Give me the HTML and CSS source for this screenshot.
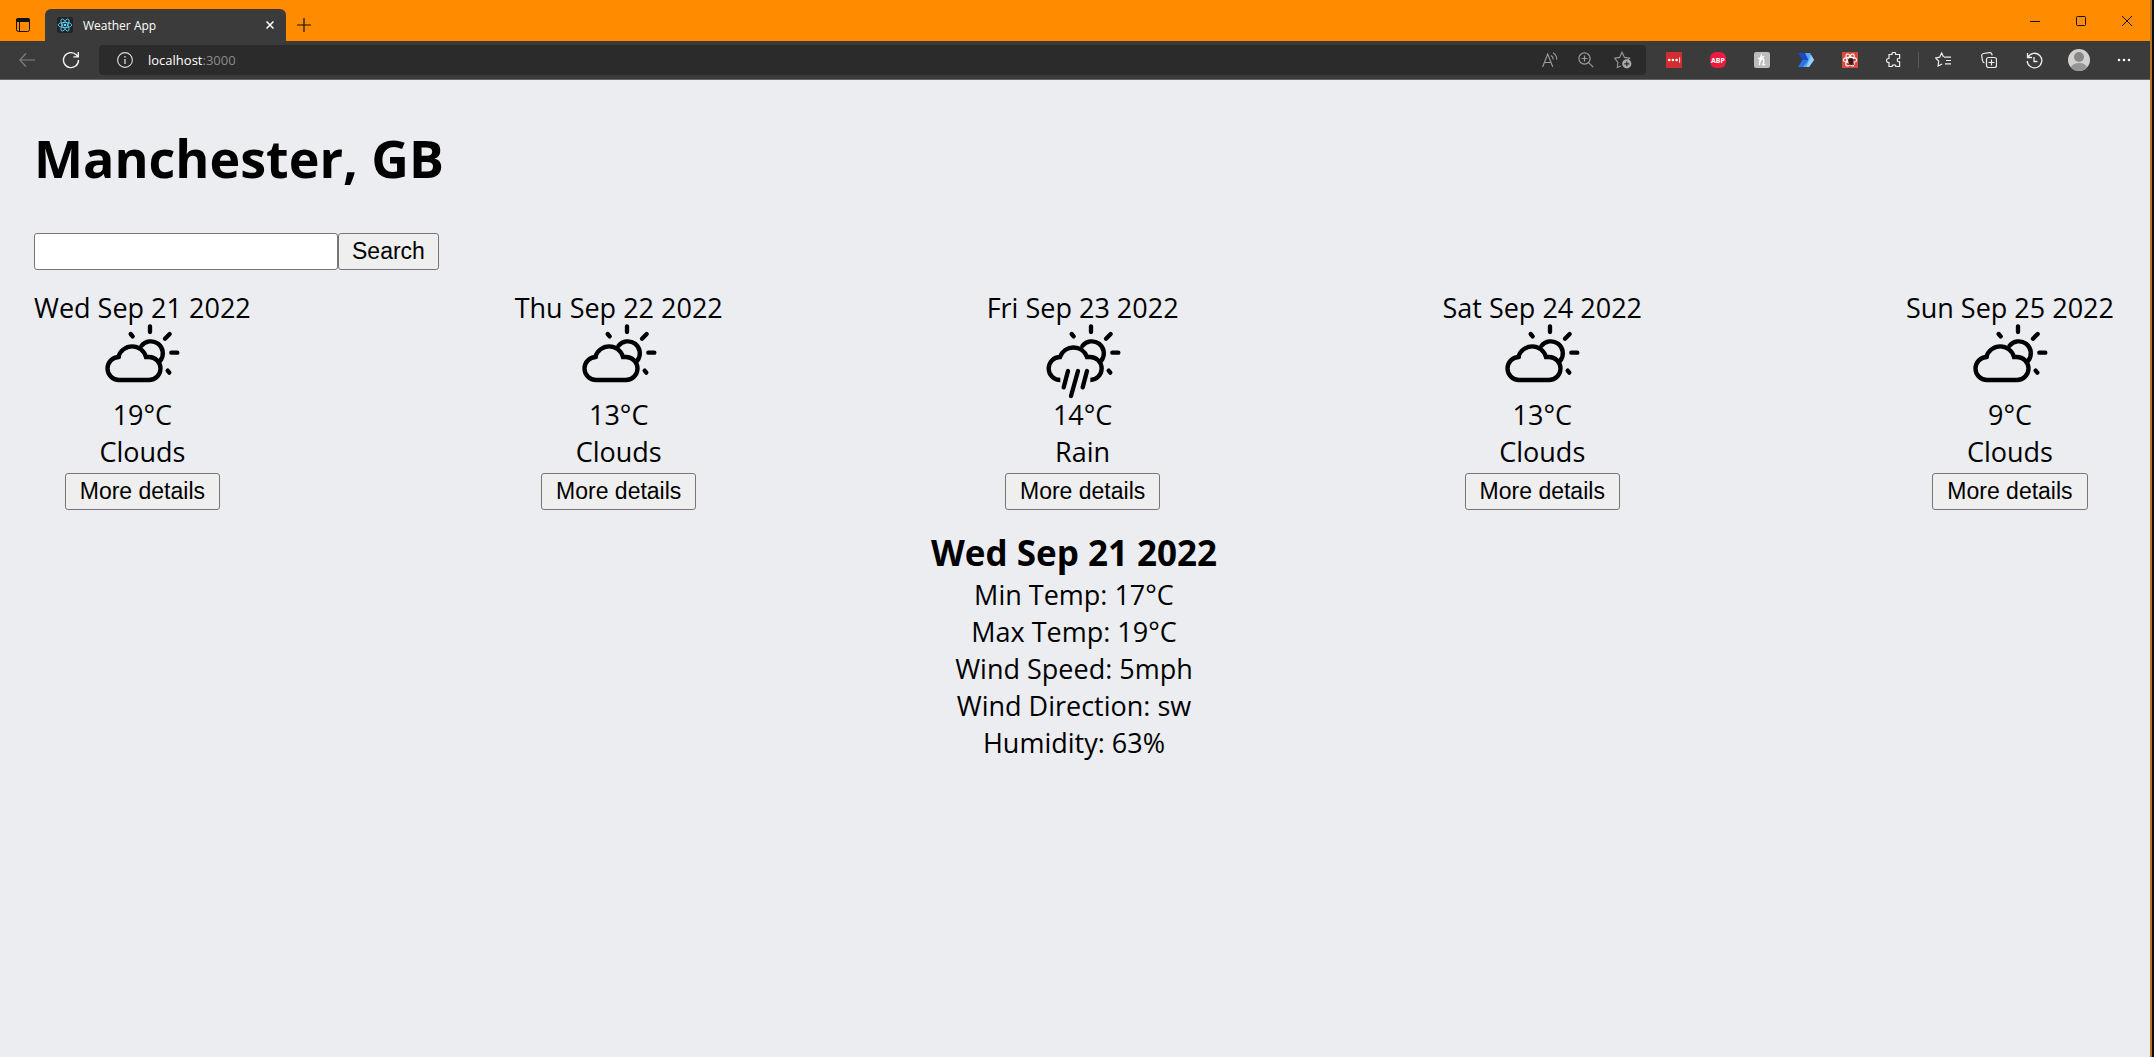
FILE: index.html
```html
<!DOCTYPE html>
<html lang="en">
<head>
<meta charset="utf-8">
<title>Weather App</title>
<link rel="stylesheet" href="styles.css">
</head>
<body>
<svg class="defs" aria-hidden="true">
  <defs>
    <g id="sun">
      <path d="M424 197A35 35 0 1 1 481 241"/>
      <path d="M450 138v17M509 161l-14 14M514 217h18M392 161l6 7M503 271l5 6"/>
    </g>
    <g id="clouds">
      <use href="#sun"/>
      <path d="M357 230A34 34 0 0 0 357 299H447A34 34 0 0 0 447 230H438A43 43 0 0 0 355 230"/>
    </g>
    <g id="rain">
      <use href="#sun"/>
      <path stroke-linecap="butt" d="M358 299A34 34 0 0 1 357 230A43 43 0 0 1 438 230H447A34 34 0 0 1 448 299"/>
      <path d="M381 272l-13 49M411 272l-21 75M438 272l-13 49"/>
    </g>
  </defs>
</svg>
<div class="window">
  <header class="titlebar">
    <button class="tab-actions" aria-label="Tab actions">
      <svg width="14" height="14" viewBox="0 0 14 14"><rect x=".5" y=".5" width="13" height="13" rx="2" fill="none" stroke="#111"/><path d="M0 4V2a2 2 0 0 1 2-2h10a2 2 0 0 1 2 2v2z" fill="#111"/><path d="M3.500 4v9" stroke="#111"/></svg>
    </button>
    <div class="tab">
      <svg width="16" height="16" viewBox="0 0 16 16"><rect width="16" height="16" rx="2" fill="#20232a"/><g fill="none" stroke="#61dafb" stroke-width=".8"><ellipse cx="8" cy="8" rx="6.800" ry="2.600"/><ellipse cx="8" cy="8" rx="6.800" ry="2.600" transform="rotate(60 8 8)"/><ellipse cx="8" cy="8" rx="6.800" ry="2.600" transform="rotate(120 8 8)"/></g><circle cx="8" cy="8" r="1.300" fill="#61dafb"/></svg>
      <span class="tab-title">Weather App</span>
      <button aria-label="Close tab"><svg width="8" height="8" viewBox="0 0 8 8"><path d="M.5.5l7 7M7.500.5l-7 7" stroke="#fff" stroke-width="1.500"/></svg></button>
    </div>
    <button class="new-tab" aria-label="New tab"><svg width="14" height="14" viewBox="0 0 14 14"><path d="M7 0v14M0 7h14" stroke="#111" stroke-width="1.200"/></svg></button>
    <div class="window-controls">
      <button aria-label="Minimize"><svg width="10" height="10" viewBox="0 0 10 10"><path d="M0 5.500h10" stroke="#111"/></svg></button>
      <button aria-label="Maximize"><svg width="10" height="10" viewBox="0 0 10 10"><rect x=".5" y=".5" width="9" height="9" rx="1" fill="none" stroke="#111"/></svg></button>
      <button aria-label="Close"><svg width="10" height="10" viewBox="0 0 10 10"><path d="M0 0l10 10M10 0L0 10" stroke="#111"/></svg></button>
    </div>
  </header>
  <nav class="toolbar">
    <button class="back" aria-label="Back"><svg width="16" height="14" viewBox="0 0 16 14"><path d="M7 .5L.8 7 7 13.500M.8 7H16" fill="none" stroke="#818181" stroke-width="1.100"/></svg></button>
    <button class="reload" aria-label="Refresh"><svg width="18" height="18" viewBox="0 0 18 18"><path d="M16.500 9A7.500 7.500 0 1 1 14.500 4L16 5.600M16.300 1v4.900h-4.900" fill="none" stroke="#f2f2f2" stroke-width="1.400"/></svg></button>
    <div class="address">
      <svg width="16" height="16" viewBox="0 0 16 16"><circle cx="8" cy="8" r="7.400" fill="none" stroke="#ddd" stroke-width="1.100"/><path d="M8 7v5M8 4v1.500" stroke="#ddd" stroke-width="1.300"/></svg>
      <span class="url"><b>localhost</b>:3000</span>
      <button aria-label="Read aloud"><svg width="16" height="16" viewBox="0 0 16 16" fill="none" stroke="#9b9b9b" stroke-width="1.100"><path d="M.6 15L5.700 2l5.100 13M2.400 10.500H9M9 3.500q2.300 1.300 2.200 4M11 .8q4 2.500 3.800 7"/></svg></button>
      <button aria-label="Zoom"><svg width="16" height="16" viewBox="0 0 16 16" fill="none" stroke="#9b9b9b" stroke-width="1.200"><circle cx="6.500" cy="6.500" r="5.600"/><path d="M3.500 6.500h6M6.500 3.500v6M10.600 10.600l4.600 4.600"/></svg></button>
      <button aria-label="Add to favorites"><svg width="18" height="18" viewBox="0 0 18 18"><path d="M7 15l-3.700 1.500.6-5L.6 7.200l5-.8L8 1.200l2.500 5.200 5 .8-1.600 1.700" fill="none" stroke="#9b9b9b" stroke-width="1.100"/><circle cx="12.800" cy="12.800" r="4.600" fill="#aaa"/><path d="M12.800 10.300v5M10.300 12.800h5" stroke="#2b2b2b" stroke-width="1.200"/></svg></button>
    </div>
    <div class="extensions">
      <button aria-label="Password manager"><svg width="16" height="16" viewBox="0 0 16 16"><rect width="16" height="16" rx="1" fill="#d32d2f"/><g fill="#fff"><circle cx="3.200" cy="8" r="1.300"/><circle cx="6.900" cy="8" r="1.300"/><circle cx="10.600" cy="8" r="1.300"/><path d="M13.200 5.200h.9v5.600h-.9z"/></g></svg></button>
      <button class="abp" aria-label="Adblock Plus">ABP</button>
      <button aria-label="Honey"><svg width="16" height="16" viewBox="0 0 16 16"><rect width="16" height="16" rx="2" fill="#bcbcbc"/><path d="M7.400 3q-1.600 4-1.900 9.500M6 9.500q1.800-3.200 3.200-2.500T8.900 12.500h1.800M4.500 6.500q3 .3 5-2" fill="none" stroke="#fff" stroke-width="1.400" stroke-linecap="round"/></svg></button>
      <button aria-label="Power Automate"><svg width="16" height="14" viewBox="0 0 16 14"><path d="M0 0h7l4 7H4.500z" fill="#174bc8"/><path d="M4.500 7H11l-5 7H0z" fill="#2974e8"/><path d="M7 0h5l4 7-5 7H5l5.500-7z" fill="#5aa5f5"/><path d="M13 1.800L16 7l-5 7H8.500z" fill="#93cffd"/></svg></button>
      <button aria-label="React developer tools"><svg width="16" height="16" viewBox="0 0 16 16"><rect width="16" height="16" fill="#d94a3d"/><g fill="none" stroke="#fff" stroke-width="1.100"><ellipse cx="8" cy="8" rx="6.700" ry="2.600"/><ellipse cx="8" cy="8" rx="6.700" ry="2.600" transform="rotate(60 8 8)"/><ellipse cx="8" cy="8" rx="6.700" ry="2.600" transform="rotate(120 8 8)"/></g><ellipse cx="9" cy="9.500" rx="2.600" ry="3.600" fill="#43161a"/><path d="M5.500 7l7 6M12.500 7l-6 6" stroke="#43161a"/></svg></button>
      <button aria-label="Extensions"><svg width="16" height="16" viewBox="0 0 16 16"><path d="M3 2.500h3q-.4-2.200 1.800-2.200T9.600 2.500h4v3.800q-2.300-.3-2.300 1.700t2.300 1.700v4.800h-3.800q.2-1.700-1.800-1.700t-1.800 1.700H3v-4q-2.500.1-2.500-2T3 6.500z" fill="none" stroke="#eee" stroke-width="1.200"/></svg></button>
    </div>
    <div class="browser-tools">
      <button aria-label="Favorites"><svg width="18" height="16" viewBox="0 0 18 16"><path d="M9 5.200h7M11 8.500h5M10 11.800h6M8.500 5L6.700 1 4.600 5.200.7 6l3 3.200-.6 4.800 4-2" fill="none" stroke="#eee" stroke-width="1.200"/></svg></button>
      <button aria-label="Collections"><svg width="16" height="16" viewBox="0 0 16 16" fill="none" stroke="#eee" stroke-width="1.200"><rect x="5.500" y="5.500" width="10" height="10" rx="2"/><path d="M10.500 7.500v6M7.500 10.500h6M3.500 11Q1.800 10.500 1.500 8.500L.7 4Q.5 2 2.500 1.500L8.500.6Q10.500.4 11 2.500l.2.800"/></svg></button>
      <button aria-label="History"><svg width="17" height="17" viewBox="0 0 17 17" fill="none" stroke="#eee" stroke-width="1.300"><path d="M1.500 1v4.500H6M1.900 5.400A7.300 7.300 0 1 1 1.200 9M8 5v4.500h3.500"/></svg></button>
      <button aria-label="Profile"><svg width="22" height="22" viewBox="0 0 22 22"><clipPath id="face"><circle cx="11" cy="11" r="11"/></clipPath><g clip-path="url(#face)"><path d="M0 0h22v22H0z" fill="#d2d0ce"/><circle cx="11" cy="8" r="5" fill="#8a8886"/><ellipse cx="11" cy="19" rx="8" ry="5" fill="#979593"/></g></svg></button>
      <button aria-label="Settings and more"><svg width="14" height="4" viewBox="0 0 14 4" fill="#fff"><circle cx="2" cy="2" r="1.300"/><circle cx="7" cy="2" r="1.300"/><circle cx="12" cy="2" r="1.300"/></svg></button>
    </div>
  </nav>
  <main class="app">
    <h1>Manchester, GB</h1>
    <form class="search">
      <input type="text" aria-label="City">
      <button type="submit">Search</button>
    </form>
    <section class="forecast">
      <article class="day"><div>Wed Sep 21 2022</div><svg class="weather-icon" viewBox="315 137 222 210"><use href="#clouds"/></svg><div>19°C</div><div>Clouds</div><button>More details</button></article>
      <article class="day"><div>Thu Sep 22 2022</div><svg class="weather-icon" viewBox="315 137 222 210"><use href="#clouds"/></svg><div>13°C</div><div>Clouds</div><button>More details</button></article>
      <article class="day"><div>Fri Sep 23 2022</div><svg class="weather-icon" viewBox="315 137 222 210"><use href="#rain"/></svg><div>14°C</div><div>Rain</div><button>More details</button></article>
      <article class="day"><div>Sat Sep 24 2022</div><svg class="weather-icon" viewBox="315 137 222 210"><use href="#clouds"/></svg><div>13°C</div><div>Clouds</div><button>More details</button></article>
      <article class="day"><div>Sun Sep 25 2022</div><svg class="weather-icon" viewBox="315 137 222 210"><use href="#clouds"/></svg><div>9°C</div><div>Clouds</div><button>More details</button></article>
    </section>
    <section class="details">
      <h2>Wed Sep 21 2022</h2>
      <div>Min Temp: 17°C</div>
      <div>Max Temp: 19°C</div>
      <div>Wind Speed: 5mph</div>
      <div>Wind Direction: sw</div>
      <div>Humidity: 63%</div>
    </section>
  </main>
</div>
</body>
</html>
```
FILE: styles.css
```css
* { box-sizing: border-box; }
body {
  margin: 0;
  background: #0c0c0c;
  color: #000;
  font-family: "Segoe UI", "Open Sans", "Noto Sans", sans-serif;
}
.defs { position: absolute; width: 0; height: 0; }
.window {
  display: flex;
  flex-direction: column;
  min-height: 100vh;
  margin-right: 2px;
  border-right: 2px solid #b87324;
  background: #ebedf1;
}
svg { display: block; flex: none; }
.titlebar button, .toolbar button {
  display: flex;
  align-items: center;
  justify-content: center;
  flex: none;
  padding: 0;
  border: 0;
  background: none;
}

/* Title bar */
.titlebar {
  display: flex;
  align-items: flex-end;
  height: 41px;
  background: #ff8c00;
}
.titlebar .tab-actions { width: 45px; height: 32px; }
.tab {
  display: flex;
  align-items: center;
  width: 241px;
  height: 32px;
  padding: 0 12px;
  border-radius: 6px 6px 0 0;
  background: #3b3b3b;
}
.tab-title {
  flex: 1;
  margin-left: 10px;
  color: #fff;
  font-size: 12px;
}
.titlebar .new-tab { width: 36px; height: 32px; }
.window-controls {
  display: flex;
  align-self: stretch;
  margin-left: auto;
}
.window-controls button { width: 46px; height: 42px; }

/* Toolbar */
.toolbar {
  display: flex;
  align-items: center;
  height: 39px;
  border-bottom: 1px solid #666;
  background: #3b3b3b;
}
.toolbar .back { width: 54px; height: 38px; }
.toolbar .reload { width: 34px; height: 38px; }
.address {
  display: flex;
  align-items: center;
  flex: 1;
  gap: 20px;
  height: 30px;
  margin-left: 11px;
  padding: 0 14px 0 18px;
  border-radius: 4px;
  background: #2b2b2b;
}
.url {
  flex: 1;
  margin-left: -5px;
  color: #8c8c8c;
  font-size: 13px;
}
.url b { color: #fff; font-weight: 400; }
.extensions, .browser-tools { display: flex; align-items: center; }
.extensions { padding: 0 2px 0 6px; border-right: 1px solid #5a5a5a; height: 16px; }
.extensions button, .browser-tools button { width: 44px; height: 38px; }
.browser-tools { gap: 1px; padding: 0 4px 0 3px; }
.toolbar .abp {
  width: 16px;
  height: 16px;
  margin: 0 14px;
  border-radius: 6px;
  background: #e91c3f;
  color: #fff;
  font: 700 7px "Open Sans", sans-serif;
}

/* Weather page */
.app {
  padding: 41px 36px 41px 34px;
  font-size: 27px;
  line-height: 37px;
}
h1 {
  margin: 0 0 38px;
  font-size: 52px;
  line-height: 74px;
}
.search { display: flex; }
.search input, .app button {
  height: 37px;
  margin: 0;
  border: 1px solid #767676;
  border-radius: 3px;
  font: 23px "Liberation Sans", Arial, sans-serif;
}
.search input { width: 304px; padding: 2px 4px; background: #fff; }
.app button { padding: 0 14px; background: #efefef; color: #000; }
.search button { padding: 0 13px; }
.forecast {
  display: flex;
  justify-content: space-between;
  margin-top: 19px;
}
.day, .details {
  display: flex;
  flex-direction: column;
  align-items: center;
}
.day button { margin-top: 3px; }
.weather-icon {
  width: 74px;
  height: 70px;
  overflow: visible;
  fill: none;
  stroke: #000;
  stroke-width: 13;
  stroke-linecap: round;
}
.details { margin-top: 19px; }
h2 { margin: 0; font-size: 35px; line-height: 47px; }
```
